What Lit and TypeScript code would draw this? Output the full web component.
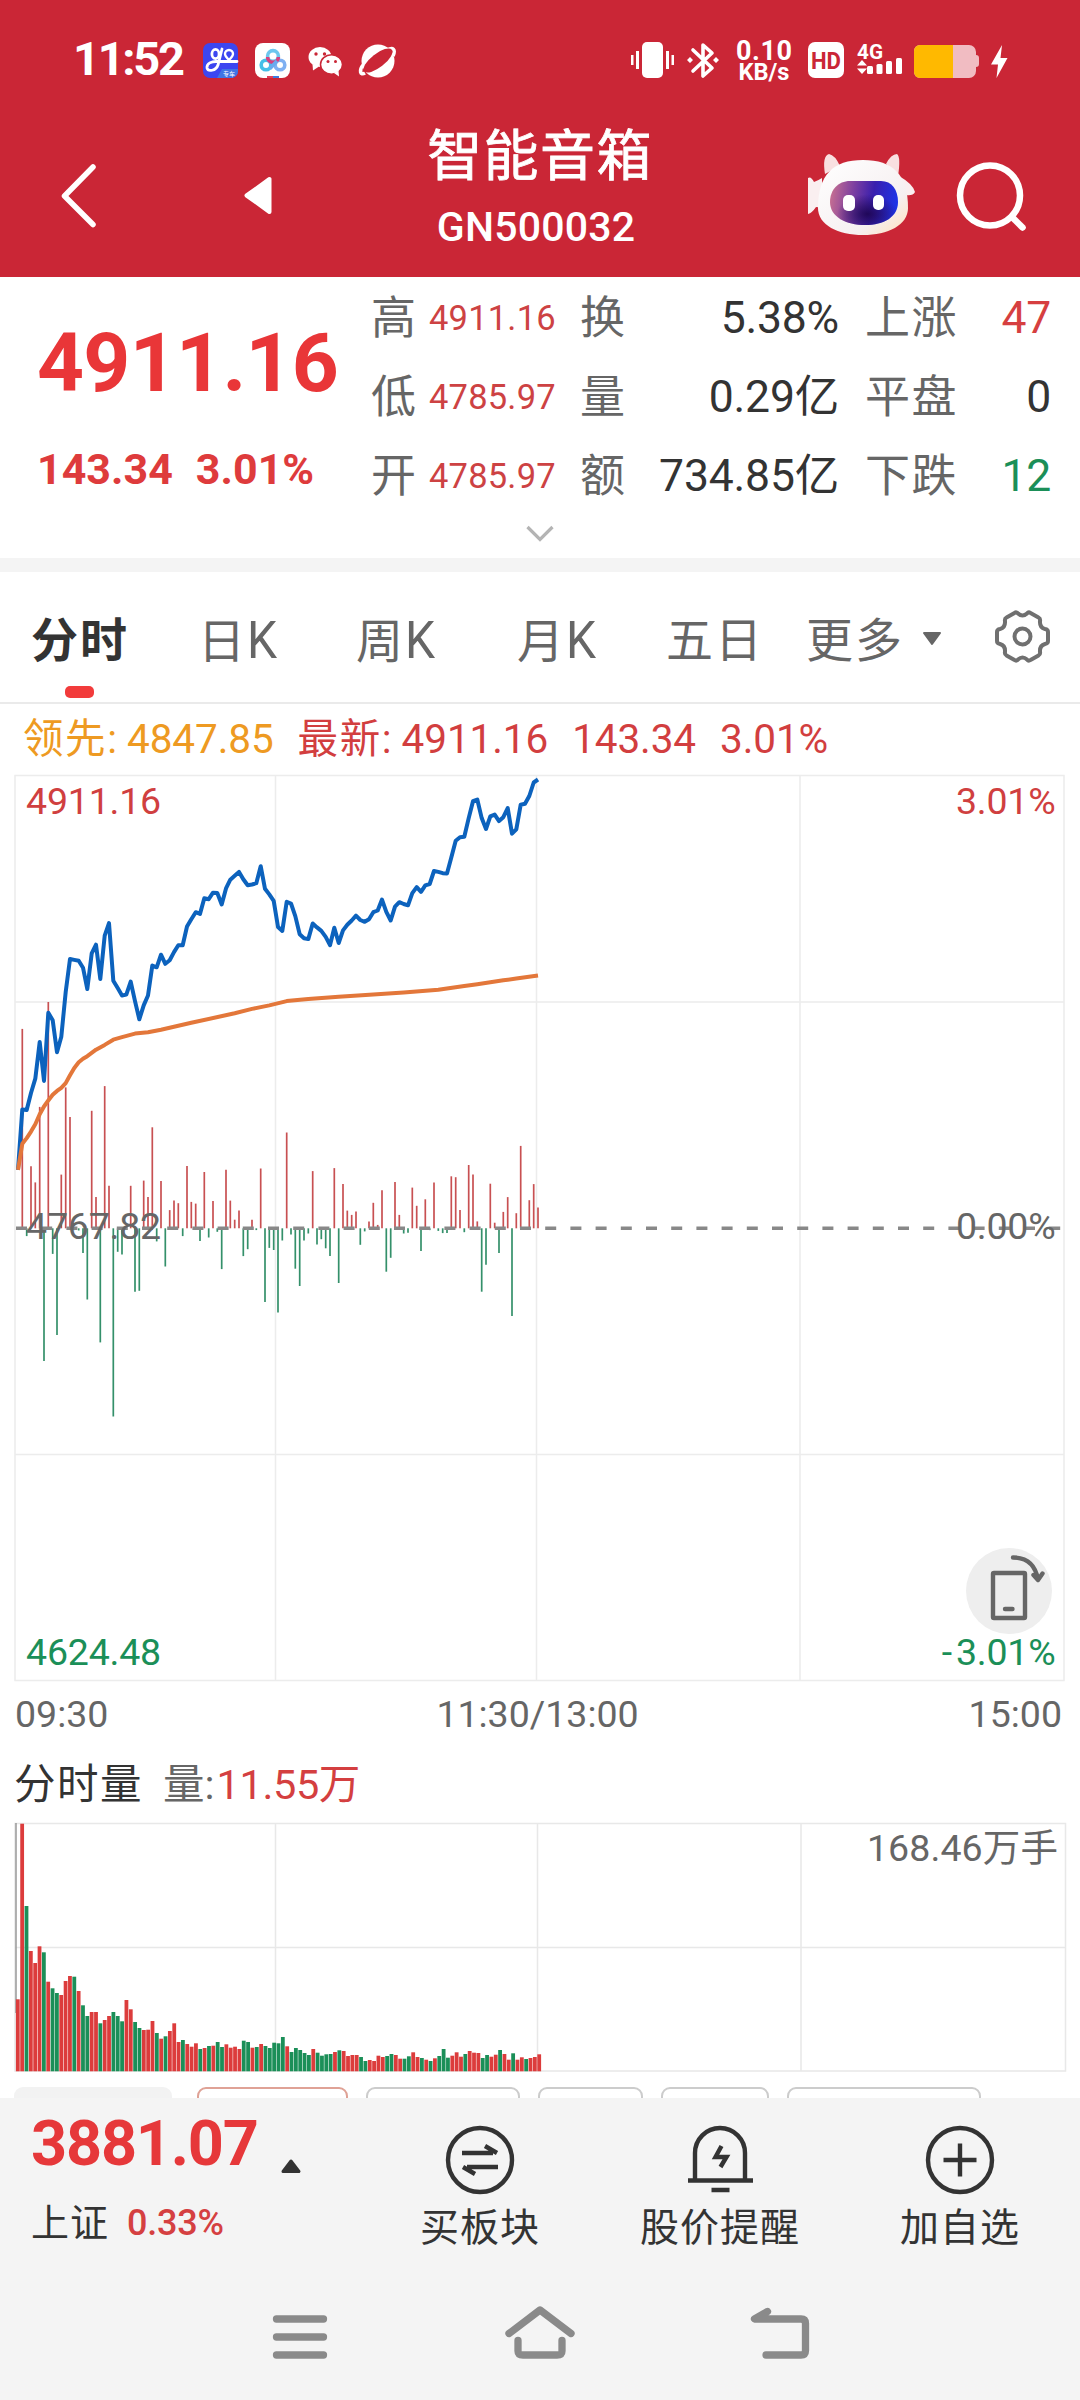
import { LitElement, html, svg, css } from "lit";
import { customElement } from "lit/decorators.js";

const RED = "#dc3c3c";
const GREEN = "#1b8f58";

// One sample per trading minute. Values are offsets in chart units.
const PRICE = [
  945, 806, 807, 768, 735, 650, 740, 583, 600, 674, 638, 535, 459, 461, 463, 479, 528, 446, 426, 505, 405, 376, 509, 526,
  543, 541, 511, 556, 598, 566, 543, 474, 478, 449, 470, 462, 443, 427, 427, 384, 367, 351, 355, 319, 321, 306, 307, 333,
  296, 276, 267, 258, 275, 289, 287, 284, 245, 297, 310, 325, 385, 394, 327, 331, 360, 402, 411, 413, 377, 386, 394, 408,
  427, 387, 422, 393, 380, 370, 359, 369, 373, 367, 351, 347, 322, 350, 370, 338, 328, 332, 335, 307, 293, 304, 289, 286,
  256, 258, 261, 262, 225, 186, 178, 177, 134, 95, 91, 134, 159, 130, 126, 141, 132, 111, 170, 160, 103, 101, 83, 52, 45,
];

const AVERAGE: [number, number][] = [
  [0, 945], [1, 885], [2, 872], [3, 857], [4, 840], [5, 817], [6, 799], [7, 785], [8, 772], [9, 763], [10, 756], [11, 745],
  [12, 727], [13, 710], [14, 697], [15, 689], [16, 683], [18, 668], [20, 657], [22, 645], [24, 639], [27, 631], [30, 628],
  [33, 622], [40, 606], [50, 584], [54, 574], [58, 566], [62, 556], [67, 551], [74, 546], [82, 541], [89, 536], [97, 530],
  [103, 521], [106, 517], [112, 508], [115, 504], [120, 497],
];

const FLOW: [number, number][] = [
  [1, 620], [2, 1098], [3, 937], [4, 974], [5, 800], [6, 1386], [7, 558], [8, 1139], [9, 1326], [10, 956], [11, 755],
  [12, 823], [13, 1084], [14, 1085], [15, 1137], [16, 1244], [17, 809], [18, 1008], [19, 1343], [20, 752], [21, 982],
  [22, 1514], [23, 1134], [24, 1140], [26, 982], [27, 1226], [28, 1224], [29, 970], [30, 1008], [31, 847], [32, 1110],
  [33, 971], [34, 1168], [35, 1038], [36, 1016], [37, 1022], [38, 1098], [39, 936], [40, 1019], [41, 1023], [42, 1109],
  [43, 950], [44, 1101], [45, 1017], [46, 1088], [47, 1174], [48, 945], [49, 1016], [50, 1060], [51, 1039], [52, 1144],
  [53, 1128], [54, 1060], [55, 1084], [56, 942], [57, 1250], [58, 1125], [59, 1130], [60, 1274], [61, 1108], [62, 859],
  [63, 1094], [64, 1173], [65, 1213], [66, 1108], [67, 1092], [68, 948], [69, 1117], [70, 1105], [71, 1126], [72, 1144],
  [73, 941], [74, 1206], [75, 978], [76, 1039], [77, 1049], [78, 1041], [79, 1118], [80, 1087], [81, 1064], [82, 1021],
  [83, 1072], [84, 992], [85, 1180], [86, 1148], [87, 973], [88, 1049], [89, 1092], [90, 1090], [91, 986], [92, 1028],
  [93, 1132], [94, 1013], [95, 1084], [96, 974], [97, 1086], [98, 1091], [99, 1091], [100, 960], [101, 962], [102, 1038],
  [103, 1089], [104, 934], [105, 956], [106, 1064], [107, 1226], [108, 1164], [109, 977], [110, 1067], [111, 1137],
  [112, 1042], [113, 1008], [114, 1282], [115, 1045], [116, 890], [117, 1084], [118, 1015], [119, 978], [120, 1032],
];

const VOLUME =
  "R1018 R491 G738 R873 R909 R859 G877 R965 G985 G999 R1005 R963 R948 G950 R993 G1036 G1068 R1056 R1056 G1090 " +
  "R1080 R1068 G1056 G1068 G1084 R1020 R1048 G1086 G1104 R1110 R1109 R1083 G1119 R1136 G1129 R1113 R1090 R1146 G1140 R1152 " +
  "R1160 R1150 G1167 R1164 G1158 R1157 G1146 G1161 R1153 R1163 R1160 R1167 G1142 G1146 R1163 G1161 R1152 G1158 G1164 G1148 " +
  "G1150 G1131 R1159 G1176 G1164 G1170 G1179 G1185 R1167 G1178 G1187 G1183 G1182 R1176 G1171 R1173 R1188 R1185 R1185 G1191 " +
  "G1203 R1200 R1203 R1187 R1191 G1188 G1182 R1185 R1196 G1196 G1189 R1177 R1191 G1194 R1199 G1203 R1195 G1188 G1167 G1193 " +
  "R1187 R1177 R1190 G1182 R1173 R1178 R1179 G1194 G1185 R1190 R1184 G1170 R1182 R1199 G1180 R1199 R1192 G1197 R1194 R1191 R1183";

const minuteX = (i: number) => (18 + i * 4.3333).toFixed(1);
const priceY = (v: number) => (760 + v / 2.306).toFixed(1);
const trace = (pts: [number, number][]) => pts.map(([i, v]) => `${minuteX(i)},${priceY(v)}`).join(" ");

@customElement("status-bar")
class StatusBar extends LitElement {
  static styles = css`
    :host { display: flex; height: 120px; align-items: flex-start; color: #fff; font-family: Roboto, "Noto Sans CJK SC", sans-serif; }
    .clock { margin: 34px 0 0 73px; width: 129px; font-size: 47px; line-height: 50px; font-weight: 700; letter-spacing: -2.3px; }
    .left { width: 540px; display: flex; }
    svg { display: block; flex: none; }
  `;
  render() {
    return html`
      <div class="left">
        <div class="clock">11:52</div>
        <svg width="200" height="120" viewBox="202 0 200 120">
          <rect x="203" y="43" width="35" height="35" rx="7" fill="#3c46f0" />
          <path d="M222 69h16v2a7 7 0 0 1-7 7h-14z" fill="#3f74e6" />
          <g fill="none" stroke="#fff" stroke-width="2.8" stroke-linecap="round">
            <ellipse cx="215.500" cy="54" rx="3.600" ry="4.600" />
            <path d="M222 49l-4 16c-2 6-10 7-11 3-.5-5 5-6.500 9-6.500h21" />
            <path d="M229 60c-3-3-4-4-4-6a4 4 0 0 1 8 0c0 2-1 3-4 6z" stroke-width="2.400" />
          </g>
          <text x="223" y="76" font-size="6" fill="#fff">专车</text>
          <defs>
            <linearGradient id="cloud" x1="0" x2="1"><stop offset="0" stop-color="#3fc4e8" /><stop offset="1" stop-color="#7fb0f2" /></linearGradient>
          </defs>
          <rect x="255" y="43" width="35" height="35" rx="8" fill="#fff" />
          <g fill="none" stroke-width="3.600">
            <circle cx="266" cy="65" r="4.800" stroke="#45bfe8" />
            <circle cx="280" cy="65" r="4.800" stroke="#7fb0f2" />
            <circle cx="273" cy="56" r="5.400" stroke="#6cc6ee" />
            <path d="M267.600 57a5.400 5.400 0 0 0 10.800 0" stroke="#d8417f" />
            <path d="M270 68.500l7-7.500" stroke="#6aaaf0" />
          </g>
          <path d="M267 76h6v2h-6z" fill="#e0405a" /><path d="M273 76h6v2h-6z" fill="#3c7be0" />
          <g fill="#fff">
            <ellipse cx="320" cy="57" rx="11.500" ry="10" /><path d="M312.500 64l.5 6.500 6-4z" />
            <g stroke="#ca2636" stroke-width="1.500"><ellipse cx="331.500" cy="64.500" rx="11" ry="9.700" /></g>
            <path d="M334 73l5 3.500-.5-6z" />
          </g>
          <g fill="#ca2636"><circle cx="316" cy="54" r="1.700" /><circle cx="324.500" cy="54" r="1.700" /><circle cx="328" cy="61.500" r="1.500" /><circle cx="335.500" cy="61.500" r="1.500" /></g>
          <circle cx="378" cy="61" r="16.500" fill="#fff" />
          <path d="M365 73c-5 3-6-3-2-8M387 50c6-3 9-1 6 6" fill="none" stroke="#fff" stroke-width="3.600" />
          <ellipse cx="378" cy="60.500" rx="17.500" ry="6.800" transform="rotate(-38 378 60.500)" fill="#ca2636" />
        </svg>
      </div>
      <svg width="480" height="120" viewBox="540 0 480 120" fill="#fff">
        <rect x="642" y="42" width="21" height="36" rx="5" />
        <path d="M636 51h3v18h-3zM631 55h2.500v10H631zM666 51h3v18h-3zM671.500 55h2.500v10h-2.500z" />
        <path d="M693 50l19 18-9 8V45l9 8-19 18" fill="none" stroke="#fff" stroke-width="3.600" stroke-linejoin="round" stroke-linecap="round" />
        <path d="M687 60l3-3 3 3-3 3zM713 60l3-3 3 3-3 3z" />
        <text x="764" y="60" text-anchor="middle" font-size="27" font-weight="700" textLength="56">0.10</text>
        <text x="764" y="80" text-anchor="middle" font-size="23" font-weight="700" textLength="51" lengthAdjust="spacingAndGlyphs">KB/s</text>
        <rect x="808" y="42" width="36" height="36" rx="7" />
        <text x="826" y="68.500" text-anchor="middle" font-size="24" font-weight="700" fill="#ca2636" textLength="30" lengthAdjust="spacingAndGlyphs">HD</text>
        <text x="857" y="58.500" font-size="20" font-weight="700" textLength="26" lengthAdjust="spacingAndGlyphs">4G</text>
        <path d="M857 65.500l5-5.500 5 5.500zM857 68.500l5 5.500 5-5.500z" />
        <rect x="867" y="66" width="6" height="8" rx="1.500" /><rect x="876.500" y="64" width="6" height="10" rx="1.500" />
        <rect x="886" y="61" width="6" height="13" rx="1.500" /><rect x="896" y="58" width="6" height="16" rx="1.500" />
        <path d="M920 45h49a7 7 0 0 1 7 7v3q3 0 3 3v6q0 3-3 3v4a7 7 0 0 1-7 7h-49a6 6 0 0 1-6-6V51a6 6 0 0 1 6-6z" fill="#f1bcc2" />
        <path d="M920 45h33v33h-33a6 6 0 0 1-6-6V51a6 6 0 0 1 6-6z" fill="#ffb900" />
        <path d="M1002 45l-11 19.500h7L996.500 78 1007.500 58h-7z" />
      </svg>
    `;
  }
}

@customElement("nav-header")
class NavHeader extends LitElement {
  static styles = css`
    :host { display: grid; grid-template-columns: 400px 280px 400px; height: 157px; color: #fff; font-family: Roboto, "Noto Sans CJK SC", sans-serif; }
    svg { display: block; }
    .title { text-align: center; }
    .name { font-size: 55px; line-height: 60px; margin-top: 6px; letter-spacing: 1.4px; -webkit-text-stroke: 0.8px #fff; }
    .code { font-size: 41px; line-height: 50px; margin-top: 16px; font-weight: 500; letter-spacing: 0.2px; margin-right: 8px; }
  `;
  render() {
    return html`
      <svg width="400" height="157" viewBox="0 120 400 157">
        <path d="M93 167L64.500 196 93 224.500" fill="none" stroke="#fff" stroke-width="5.500" stroke-linecap="round" stroke-linejoin="round" />
        <path d="M269.500 179v33L246.500 195.500z" fill="#fff" stroke="#fff" stroke-width="4" stroke-linejoin="round" />
      </svg>
      <div class="title"><div class="name">智能音箱</div><div class="code">GN500032</div></div>
      <svg width="400" height="157" viewBox="680 120 400 157">
        <defs>
          <linearGradient id="face" x1="0" y1=".4" x2="1" y2=".5">
            <stop offset="0" stop-color="#c56e92" /><stop offset=".32" stop-color="#7d3fa0" /><stop offset=".62" stop-color="#3a1fae" /><stop offset="1" stop-color="#1d34ea" />
          </linearGradient>
          <radialGradient id="shade" cx=".55" cy=".75" r=".45"><stop offset="0" stop-color="#1c0550" stop-opacity=".9" /><stop offset="1" stop-color="#1c0550" stop-opacity="0" /></radialGradient>
          <linearGradient id="shell" x1="0" y1="0" x2="1" y2="1"><stop offset="0" stop-color="#fff" /><stop offset=".7" stop-color="#f6f0f1" /><stop offset="1" stop-color="#ffe0bd" /></linearGradient>
        </defs>
        <path d="M808 178q3-2 6 4 5-2 8-4v30q-4-1-6-1-4 6-8 7zM899 176q14 8 16 16-2 4-9 3z" fill="#faeff0" />
        <path d="M825 174q-3-18 4-20 6 1 11 12zM886 164q5-10 11-10 4 3 1 22z" fill="#f9dfe0" />
        <path d="M863 160c30 0 45 15 45 48 0 17-20 27-45 27s-45-10-45-27c0-33 15-48 45-48z" fill="url(#shell)" />
        <path d="M850 181h31c11 0 17 9 17 21 0 15-14 23-33 23s-35-8-35-23c0-12 8-21 20-21z" fill="url(#face)" />
        <path d="M850 181h31c11 0 17 9 17 21 0 15-14 23-33 23s-35-8-35-23c0-12 8-21 20-21z" fill="url(#shade)" />
        <rect x="843" y="195" width="12" height="16" rx="5" fill="#fff" /><rect x="873" y="195" width="11" height="15" rx="5" fill="#fff" />
        <g fill="none" stroke="#fff" stroke-width="6.500" stroke-linecap="round"><circle cx="990" cy="195.500" r="30" /><path d="M1012 217l10.500 10.500" /></g>
      </svg>
    `;
  }
}

@customElement("quote-panel")
class QuotePanel extends LitElement {
  static styles = css`
    :host { display: block; height: 281px; background: #fff; font-family: Roboto, "Noto Sans CJK SC", sans-serif; }
    .body { display: flex; padding-top: 1px; }
    .main { width: 371px; color: #e93638; font-weight: 700; }
    .last { font-size: 82px; line-height: 90px; padding: 40px 0 0 37px; letter-spacing: -0.7px; white-space: nowrap; }
    .change { display: flex; gap: 23px; font-size: 43px; line-height: 50px; margin-top: 36px; padding-left: 37px; color: #de3b3c; }
    .grid { display: grid; grid-template-columns: 58px 151px 56px 203px 26px 94px 92px; grid-auto-rows: 79px; align-items: center; line-height: 60px; }
    .label { font-size: 45px; color: #666; letter-spacing: 1.5px; white-space: nowrap; padding-top: 3px; }
    .small { font-size: 34.500px; color: #cd4243; letter-spacing: 0.2px; }
    .value { font-size: 44.500px; color: #333; text-align: right; white-space: nowrap; letter-spacing: -0.2px; }
    .up { color: #d63f40; } .down { color: #1b8f58; }
    .wide { grid-column: 6; }
    .more { display: block; margin: 10px auto 0; }
  `;
  render() {
    const rows = [
      ["高", "4911.16", "换", "5.38%", "上涨", "47", "up"],
      ["低", "4785.97", "量", "0.29亿", "平盘", "0", ""],
      ["开", "4785.97", "额", "734.85亿", "下跌", "12", "down"],
    ];
    return html`
      <div class="body">
        <div class="main">
          <div class="last">4911.16</div>
          <div class="change"><span>143.34</span><span>3.01%</span></div>
        </div>
        <div class="grid">
          ${rows.map(
            (r) => html`
              <span class="label">${r[0]}</span><span class="small">${r[1]}</span><span class="label">${r[2]}</span>
              <span class="value">${r[3]}</span><span class="label wide">${r[4]}</span><span class="value ${r[6]}">${r[5]}</span>
            `
          )}
        </div>
      </div>
      <svg class="more" width="32" height="18" viewBox="0 0 32 18"><path d="M3.500 2L16 14.500 28.500 2" fill="none" stroke="#b4b4b4" stroke-width="3.200" /></svg>
    `;
  }
}

@customElement("period-tabs")
class PeriodTabs extends LitElement {
  static styles = css`
    :host { display: block; box-sizing: border-box; height: 146px; border-top: 14px solid #f4f4f4; border-bottom: 2px solid #eaeaea; background: #fff; font-family: Roboto, "Noto Sans CJK SC", sans-serif; }
    .row { display: grid; grid-template-columns: 167px 158px 161px 149px 140px 115px 72px 1fr; padding-left: 31px; }
    .tab { margin-top: 37px; font-size: 47px; line-height: 64px; color: #666; letter-spacing: 2px; white-space: nowrap; }
    .tab b { font-weight: 400; font-size: 52px; display: inline-block; transform: scaleX(0.92); transform-origin: left; }
    .on { color: #333; font-weight: 700; }
    .on::after { content: ""; display: block; width: 29px; height: 12px; margin: 13px 0 0 34px; border-radius: 5px; background: #f23b3b; }
    svg { display: block; }
  `;
  render() {
    return html`
      <div class="row">
        <div class="tab on">分时</div>
        <div class="tab">日<b>K</b></div><div class="tab">周<b>K</b></div><div class="tab">月<b>K</b></div>
        <div class="tab">五日</div><div class="tab">更多</div>
        <svg width="72" height="130" viewBox="921 572 72 130"><path d="M924 633h16l-8 11z" fill="#666" stroke="#666" stroke-width="2" stroke-linejoin="round" /></svg>
        <svg width="80" height="130" viewBox="993 572 80 130" fill="none" stroke="#707070" stroke-width="4" stroke-linejoin="round">
          <path d="M1014.500 613q2-1.500 3.500.5 4.500 4 9 0 1.500-2 3.500-.5l8 4.500q2 1 1.500 3.500-.5 6.500 5 8 3 .5 3 3v9q0 2.500-3 3-5.500 1.500-5 8 .5 2.500-1.500 3.500l-8 4.500q-2 1.500-3.500-.5-4.500-4-9 0-1.500 2-3.500.5l-8-4.500q-2-1-1.500-3.500.5-6.500-5-8-3-.5-3-3v-9q0-2.500 3-3 5.500-1.500 5-8-.5-2.500 1.500-3.500z" />
          <circle cx="1022.500" cy="636.500" r="8" />
        </svg>
      </div>
    `;
  }
}

@customElement("intraday-chart")
class IntradayChart extends LitElement {
  static styles = css`
    :host { display: block; background: #fff; font-family: Roboto, "Noto Sans CJK SC", sans-serif; }
    .legend { display: flex; box-sizing: border-box; height: 68px; padding: 3px 0 0 23px; font-size: 40.500px; line-height: 64px; color: #d23e3f; white-space: nowrap; letter-spacing: -0.1px; }
    .k { letter-spacing: 1.6px; width: 104px; display: inline-block; }
    .lead { color: #ee9a22; }
    .latest { margin-left: 24px; }
    .gap { margin-left: 24px; }
    .axis { display: flex; justify-content: space-between; height: 60px; padding: 0 18px 0 15px; font-size: 37.500px; line-height: 60px; color: #666; }
    .mid { margin-right: 2px; }
    svg { display: block; }
    .tag { font-size: 37.500px; letter-spacing: -0.2px; }
  `;
  render() {
    return html`
      <div class="legend">
        <div class="lead"><span class="k">领先:</span>4847.85</div>
        <div class="latest"><span class="k">最新:</span>4911.16</div>
        <div class="gap">143.34</div><div class="gap">3.01%</div>
      </div>
      <svg width="1080" height="912" viewBox="0 772 1080 912">
        <g fill="none" stroke="#ececec" stroke-width="1.500">
          <path d="M15 775.500h1049v905H15zM15 1002h1049M15 1454.500h1049M275.500 776v904M536.500 776v904M800 776v904" />
        </g>
        ${FLOW.map(([i, v]) => svg`<line x1=${minuteX(i)} x2=${minuteX(i)} y1="1228.3" y2=${priceY(v)} stroke=${v < 1080 ? "#c85052" : "#34906a"} stroke-width="1.7" />`)}
        <path d="M16 1228.300h1046" stroke="#888" stroke-width="3.600" stroke-dasharray="11 14.200" />
        <polyline points=${trace(PRICE.map((v, i) => [i, v] as [number, number]))} fill="none" stroke="#0c62bd" stroke-width="4" stroke-linejoin="round" />
        <polyline points=${trace(AVERAGE)} fill="none" stroke="#e3773a" stroke-width="4" stroke-linejoin="round" />
        <circle cx="1009" cy="1591" r="43" fill="#eee" />
        <g fill="none" stroke="#666" stroke-width="4.400" stroke-linecap="round" stroke-linejoin="round">
          <rect x="993" y="1573" width="32" height="45" rx="1" />
          <path d="M1005 1609h7.500M1013 1557.500q21 0 25 22M1033.500 1575l4.500 5 4.500-6.500" />
        </g>
        <g class="tag">
          <text x="26" y="814" fill="#d03f40">4911.16</text><text x="1055.500" y="814" text-anchor="end" fill="#d03f40">3.01%</text>
          <text x="26" y="1239" fill="#666">4767.82</text><text x="1055.500" y="1239" text-anchor="end" fill="#666">0.00%</text>
          <text x="26" y="1665" fill="#1b8f58">4624.48</text><text x="1055.500" y="1665" text-anchor="end" fill="#1b8f58">-<tspan dx="4">3.01%</tspan></text>
        </g>
      </svg>
      <div class="axis"><span>09:30</span><span class="mid">11:30/13:00</span><span>15:00</span></div>
    `;
  }
}

@customElement("volume-chart")
class VolumeChart extends LitElement {
  static styles = css`
    :host { display: block; height: 354px; overflow: hidden; background: #fff; font-family: Roboto, "Noto Sans CJK SC", sans-serif; }
    .head { display: flex; height: 76px; padding-left: 14px; font-size: 41.500px; line-height: 81px; color: #333; letter-spacing: 1.5px; }
    .head .q { margin-left: 20px; color: #666; letter-spacing: 0; }
    .head .n { color: #d43f40; letter-spacing: -0.4px; margin-left: 2px; }
    svg { display: block; }
    .chips { display: flex; padding: 11px 0 0 14px; gap: 18px; }
    .chip { box-sizing: border-box; flex: none; height: 60px; border: 2px solid #ccc; border-radius: 9px; width: var(--w); }
    .filled { background: #f2f2f2; border-color: #f2f2f2; margin-right: 7px; }
    .active { border-color: #dfa296; }
  `;
  render() {
    const bars = VOLUME.split(" ").map((b, i) => {
      const y = 1660 + Number(b.slice(1)) / 3;
      return svg`<rect x=${(15.9 + i * 4.345).toFixed(2)} y=${y.toFixed(1)} width="3.8" height=${(2071.3 - y).toFixed(1)} fill=${b[0] === "R" ? RED : GREEN} />`;
    });
    return html`
      <div class="head"><span>分时量</span><span class="q">量:</span><span class="n">11.55万</span></div>
      <svg width="1080" height="256" viewBox="0 1820 1080 256">
        <path d="M15 1823.500h1050.500v247.500H15zM15 1947.500h1050M275.500 1824v247M537.500 1824v247M801 1824v247" fill="none" stroke="#e8e8e8" stroke-width="1.500" />
        <path d="M16 1823v190" stroke="#999" stroke-width="1.500" />
        ${bars}
        <text x="1058" y="1861" text-anchor="end" font-size="37.500" letter-spacing=".1" fill="#666">168.46万手</text>
      </svg>
      <div class="chips">
        <div class="chip filled" style="--w:158px"></div><div class="chip active" style="--w:151px"></div>
        <div class="chip" style="--w:154px"></div><div class="chip" style="--w:105px"></div>
        <div class="chip" style="--w:108px"></div><div class="chip" style="--w:194px"></div>
      </div>
    `;
  }
}

@customElement("action-bar")
class ActionBar extends LitElement {
  static styles = css`
    :host { display: block; height: 302px; background: #f4f4f4; color: #333; font-family: Roboto, "Noto Sans CJK SC", sans-serif; }
    .row { display: grid; grid-template-columns: 360px 240px 240px 240px; height: 172px; }
    .index { padding-left: 31px; }
    .top { display: flex; align-items: flex-start; color: #e6383a; font-size: 63px; line-height: 70px; font-weight: 700; padding-top: 11px; letter-spacing: -1.2px; }
    .top svg { margin: 49px 0 0 21px; }
    .bottom { display: flex; font-size: 38px; line-height: 50px; margin-top: 19px; letter-spacing: 1px; }
    .pct { margin-left: 18px; font-size: 36px; font-weight: 500; color: #d54041; letter-spacing: -0.2px; }
    .act { text-align: center; padding-top: 24px; font-size: 39px; line-height: 50px; letter-spacing: 1px; }
    .act svg { margin: 0 auto 5px; }
    svg { display: block; flex: none; }
  `;
  render() {
    return html`
      <div class="row">
        <div class="index">
          <div class="top">3881.07<svg width="24" height="18" viewBox="0 0 24 18"><path d="M12 3l8 10.500H4z" fill="#333" stroke="#333" stroke-width="3" stroke-linejoin="round" /></svg></div>
          <div class="bottom">上证<span class="pct">0.33%</span></div>
        </div>
        <div class="act">
          <svg width="76" height="76" viewBox="-38 -38 76 76" fill="none" stroke="#333" stroke-width="4.400"><circle r="32" /><path d="M-18-7h31M5-14l12 7M18 7h-31M-5 14l-12-7" /></svg>买板块
        </div>
        <div class="act">
          <svg width="76" height="76" viewBox="-38 -38 76 76" fill="none" stroke="#333" stroke-width="4.400"><path d="M-25 20V-7a25 25 0 0 1 50 0V20M-32 20.500h65M-8.500 30h18M1.500-14l-6 11h11l-6 10" /></svg>股价提醒
        </div>
        <div class="act">
          <svg width="76" height="76" viewBox="-38 -38 76 76" fill="none" stroke="#333" stroke-width="4.400"><circle r="32" /><path d="M-16.500 0h33M0-16.500v33" /></svg>加自选
        </div>
      </div>
      <svg width="1080" height="130" viewBox="0 2270 1080 130" fill="none" stroke="#8a8a8a" stroke-width="7.300" stroke-linecap="round" stroke-linejoin="round">
        <path d="M276.500 2319h47M276.500 2337h47M276.500 2355h47" />
        <path d="M509 2333.500L540 2310l31 23.500M518 2340.500v10.500q0 4 5 4h34q5 0 5-4v-10.500" />
        <path d="M767.500 2311.500l-13 7.500H801q4.500 0 4.500 4.500v27q0 4.500-4.500 4.500h-35" />
      </svg>
    `;
  }
}

@customElement("app-root")
class AppRoot extends LitElement {
  static styles = css`
    :host { display: block; width: 1080px; height: 2400px; overflow: hidden; background: #fff; }
    .red { background: #ca2636; }
  `;
  render() {
    return html`
      <div class="red"><status-bar></status-bar><nav-header></nav-header></div>
      <quote-panel></quote-panel>
      <period-tabs></period-tabs>
      <intraday-chart></intraday-chart>
      <volume-chart></volume-chart>
      <action-bar></action-bar>
    `;
  }
}
